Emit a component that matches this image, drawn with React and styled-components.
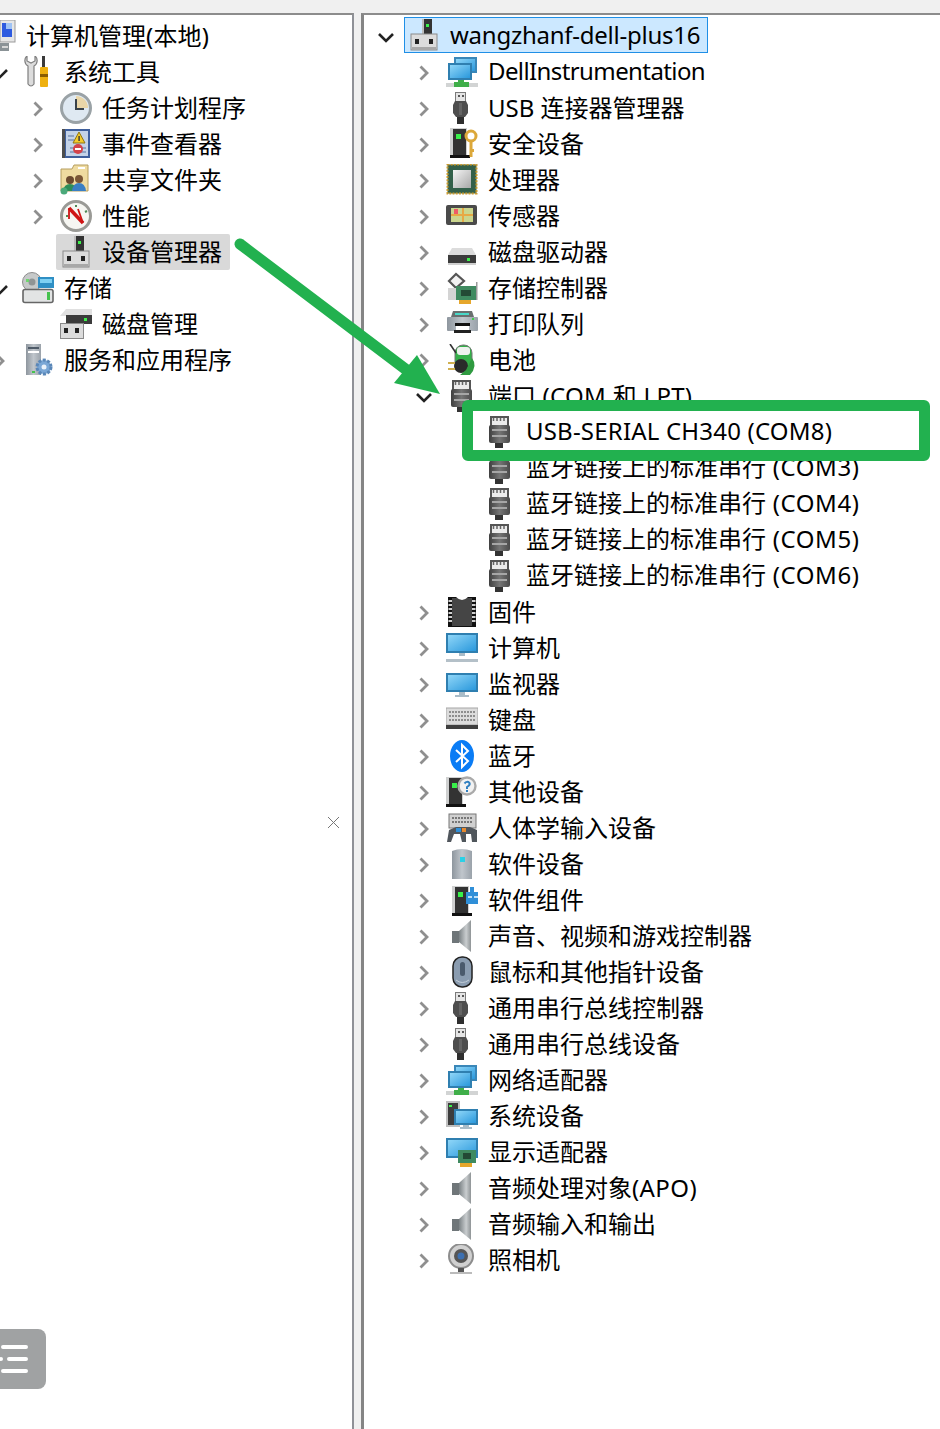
import React from 'react';
import styled, {createGlobalStyle} from 'styled-components';

const GlobalStyle = createGlobalStyle`
  html, body {
    margin: 0;
    padding: 0;
    background: #fff;
  }
  body {
    font-family: "Noto Sans", "Noto Sans CJK SC", sans-serif;
    color: #000;
  }
`;

const Page = styled.div`
  position: relative;
  width: 940px;
  height: 1429px;
  overflow: hidden;
  display: flex;
  flex-direction: column;
  background: #f0f0f0;
`;

const TopStrip = styled.div`
  height: 13px;
  flex: none;
`;

const Panes = styled.div`
  flex: 1;
  display: flex;
  min-height: 0;
  gap: 7px;
`;

const Pane = styled.div`
  background: #fff;
  border-top: 2px solid #8c8c8c;
  overflow: hidden;
  box-sizing: border-box;
  padding-top: 3px;
`;

const LeftPane = styled(Pane)`
  width: 354px;
  flex: none;
  border-right: 2px solid #8f9197;
`;

const RightPane = styled(Pane)`
  flex: 1;
  border-left: 3px solid #858585;
`;

const Tree = styled.div`
  display: flex;
  flex-direction: column;
  margin-left: ${p => p.$offset || 0}px;
`;

const Row = styled.div`
  display: flex;
  align-items: flex-start;
  height: 36px;
  padding-left: ${p => p.$depth * 38}px;
  flex: none;
`;

const ChevronBox = styled.div`
  width: 44px;
  height: 36px;
  flex: none;
  display: flex;
  align-items: center;
  justify-content: center;
  padding-top: 2px;
  box-sizing: border-box;
`;

const Item = styled.div`
  display: flex;
  align-items: center;
  gap: 10px;
  height: 36px;
  padding: 0 8px 0 4px;
  margin-left: -4px;
  margin-top: ${p => p.$sel === 'focus' ? '-1px' : '0'};
  box-sizing: border-box;
  white-space: nowrap;
  background: ${p => p.$sel === 'focus' ? '#cce8ff' : p.$sel === 'idle' ? '#d9d9d9' : 'transparent'};
  border-radius: ${p => p.$sel === 'idle' ? '2px' : '0'};
  box-shadow: ${p => p.$sel === 'focus' ? 'inset 0 0 0 1px #1f8fe6' : 'none'};
`;

const Label = styled.span`
  font-size: 24px;
  line-height: 36px;
  letter-spacing: ${p => p.$ls || 0}px;
  margin-top: ${p => p.$lift ? '-2px' : '0'};
`;

const Tail = styled.span`
  letter-spacing: ${p => p.$ls || 0}px;
`;

const IconBox = styled.svg`
  width: 32px;
  height: 32px;
  flex: none;
  display: block;
`;

const Defs = styled.svg`
  position: absolute;
  width: 0;
  height: 0;
`;

const ArrowMark = styled.svg`
  position: absolute;
  left: 230px;
  top: 234px;
  width: 220px;
  height: 170px;
  pointer-events: none;
`;

const HighlightBox = styled.div`
  position: absolute;
  left: 462px;
  top: 400px;
  width: 468px;
  height: 61px;
  box-sizing: border-box;
  border: 11px solid #22b14f;
  border-radius: 6px;
  pointer-events: none;
`;

const CloseMark = styled.svg`
  position: absolute;
  left: 327px;
  top: 816px;
  width: 13px;
  height: 13px;
`;

const FloatButton = styled.div`
  position: absolute;
  left: 0;
  top: 1329px;
  width: 46px;
  height: 60px;
  background: #a0a2a3;
  border-radius: 0 8px 8px 0;
  display: flex;
  align-items: center;
`;

const Tower = ({x = 0, y = 0}) => (
  <g transform={`translate(${x} ${y})`}>
    <rect x="0" y="0" width="17" height="27" fill="#cfd0d0" />
    <rect x="3" y="1" width="13" height="26" fill="#333" />
    <rect x="6" y="6" width="5" height="5" fill="#38f04a" />
    <rect x="0" y="27" width="20" height="3" fill="#111" />
  </g>
);

const Screen = ({x, y, w, h, frame = '#2f7fb0'}) => (
  <g>
    <rect x={x} y={y} width={w} height={h} fill={frame} />
    <rect x={x + 2} y={y + 2} width={w - 4} height={h - 4} fill="url(#scr)" />
  </g>
);

const BaseBlock = ({x = 0, y = 0}) => (
  <g transform={`translate(${x} ${y})`}>
    <rect x="0" y="0" width="26" height="16" fill="#dcdcdc" stroke="#8a8a8a" />
    <rect x="4" y="5" width="4" height="5" fill="#222" />
    <rect x="18" y="5" width="4" height="5" fill="#222" />
    <rect x="1" y="13" width="24" height="3" fill="#a8a8a8" />
  </g>
);

const Speaker = () => (
  <g>
    <rect x="6" y="11" width="7" height="12" fill="#6f7679" />
    <path d="M13 11 L25 0 V32 L13 22 Z" fill="url(#cone)" />
  </g>
);

const Usb = () => (
  <g>
    <rect x="9.5" y="0.5" width="10" height="9" fill="#e4e4e4" stroke="#7a7a7a" />
    <rect x="12" y="3" width="2" height="2" fill="#555" />
    <rect x="16" y="3" width="2" height="2" fill="#555" />
    <path d="M9 9 H20 L22 13 V21 L19 25 H10 L7 21 V13 Z" fill="#4e4e4e" />
    <rect x="13" y="11" width="3" height="12" fill="#646464" />
    <rect x="11" y="25" width="7" height="7" fill="#2e2e2e" />
  </g>
);

const Port = () => (
  <g>
    <rect x="6" y="0" width="19" height="10" fill="#555" />
    <rect x="8" y="2" width="15" height="7" fill="#ececec" />
    <path d="M9.5 2 v3 M13 2 v3 M16.5 2 v3 M20 2 v3" stroke="#666" strokeWidth="1.5" />
    <rect x="5" y="9" width="21" height="18" rx="2" fill="url(#portBody)" />
    <rect x="8" y="13" width="15" height="2" fill="#a6a6a6" />
    <rect x="8" y="19" width="15" height="2" fill="#a6a6a6" />
    <rect x="11" y="27" width="8" height="5" fill="#333" />
  </g>
);

const Network = () => (
  <g>
    <Screen x={8} y={1} w={23} h={16} frame="#3a87b8" />
    <Screen x={2} y={7} w={24} h={17} />
    <rect x="0" y="27" width="32" height="4" fill="#d2d4d4" />
    <rect x="12" y="24" width="6" height="3" fill="#3fae49" />
    <rect x="8" y="26" width="15" height="5" fill="#3fae49" />
  </g>
);

const icons = {
  computer: (
    <g>
      <rect x="16" y="0" width="15" height="22" fill="#e6e6e6" stroke="#9a9a9a" />
      <rect x="18" y="3" width="10" height="14" fill="#2e5be0" />
      <rect x="22" y="3" width="6" height="6" fill="#9fc3f5" />
      <rect x="16" y="23" width="9" height="8" fill="#8a9296" />
      <rect x="18" y="26" width="6" height="2" fill="#d6d6d6" />
    </g>
  ),
  tools: (
    <g>
      <path d="M5 0 C2 2 2 8 6 10 V28 Q9 32 12 28 V10 C16 8 16 2 13 0 V5 L9 7 L5 5 Z" fill="#dcdcdc" stroke="#7f7f7f" strokeWidth="1.2" />
      <rect x="20" y="0" width="3" height="11" fill="#3a3a3a" />
      <rect x="18" y="11" width="8" height="20" rx="1" fill="#eeb010" />
      <rect x="18" y="18" width="8" height="3" fill="#8a5c00" />
    </g>
  ),
  clock: (
    <g>
      <circle cx="16" cy="16" r="14.5" fill="#dfe9f2" stroke="#9aa2a6" strokeWidth="3" />
      <path d="M16 16 V4 A12 12 0 0 1 28 16 Z" fill="#ead6a8" />
      <path d="M16 7 V17 H24" fill="none" stroke="#39424a" strokeWidth="2" />
    </g>
  ),
  eventlog: (
    <g>
      <rect x="3" y="1" width="27" height="29" fill="#3f5f9c" />
      <rect x="6" y="3" width="22" height="25" fill="#c4d3e8" />
      <path d="M10 20 H26 M10 24 H26 M8 8 H14 M8 12 H14" stroke="#7d94b8" strokeWidth="1.5" />
      <rect x="2" y="1" width="3" height="29" fill="#4d4d4d" />
      <path d="M19 4 L25 15 H13 Z" fill="#f4cb2c" stroke="#8f7412" />
      <rect x="18.4" y="8" width="1.4" height="5" fill="#333" />
      <circle cx="18" cy="21" r="5" fill="#d4434a" />
      <rect x="15" y="20" width="6" height="2" fill="#fff" />
    </g>
  ),
  folder: (
    <g>
      <path d="M1 5 H12 L14 1 H28 V27 H1 Z" fill="#efdba0" stroke="#b69e5e" />
      <rect x="18" y="3" width="7" height="2" fill="#fff" />
      <circle cx="10" cy="16" r="4" fill="#6b4a2f" />
      <path d="M3 27 Q4 20 10 20 Q16 20 17 27 Z" fill="#2e8d58" />
      <circle cx="19" cy="15" r="4" fill="#7a5636" />
      <path d="M12 27 Q13 19 19 19 Q25 19 26 27 Z" fill="#3a7fc4" />
      <circle cx="4" cy="27" r="3.5" fill="#4ba97a" />
    </g>
  ),
  perf: (
    <g>
      <circle cx="16" cy="16" r="14.5" fill="#f6f6f2" stroke="#9a9a96" strokeWidth="3" />
      <path d="M9 8 L23 23" stroke="#cf1515" strokeWidth="3.5" />
      <path d="M9 8 V19 M18 9 L23 23" stroke="#cf1515" strokeWidth="1.8" fill="none" />
      <path d="M6 16 H8 M16 5 V7 M25 12 L27 11" stroke="#4d8a55" strokeWidth="2" />
    </g>
  ),
  devmgr: (
    <g>
      <rect x="14" y="0" width="10" height="15" fill="#333" />
      <rect x="14" y="0" width="2" height="15" fill="#bdbdbd" />
      <rect x="18" y="5" width="3" height="3" fill="#3cf04a" />
      <BaseBlock x={3} y={15} />
    </g>
  ),
  storage: (
    <g>
      <circle cx="10" cy="10" r="9.5" fill="#c6c9c9" stroke="#8d8d8d" />
      <circle cx="10" cy="10" r="3.5" fill="#8f9494" />
      <rect x="4" y="7" width="3" height="3" fill="#6fd66f" />
      <rect x="16" y="5" width="16" height="11" fill="#2f8fc4" />
      <rect x="18" y="7" width="12" height="4" fill="#7fd0f2" />
      <rect x="1" y="17.5" width="30" height="13" rx="2" fill="#e2e4e4" stroke="#666" strokeWidth="1.6" />
      <rect x="25" y="20" width="3" height="8" fill="#45c24e" />
    </g>
  ),
  disk: (
    <g>
      <path d="M6 1 H32 V8 H0 Z" fill="#e0e0e0" />
      <rect x="6" y="7" width="26" height="9" fill="#3b3b3b" />
      <rect x="24" y="10" width="3" height="3" fill="#3cf04a" />
      <rect x="0.5" y="15.5" width="23" height="15" fill="#dcdcdc" stroke="#8a8a8a" />
      <rect x="4" y="20" width="4" height="5" fill="#222" />
      <rect x="15" y="20" width="4" height="5" fill="#222" />
    </g>
  ),
  services: (
    <g>
      <rect x="4" y="0" width="15" height="31" fill="url(#tower)" />
      <rect x="6" y="3" width="11" height="2" fill="#4f5b68" />
      <rect x="6" y="7" width="11" height="2" fill="#fff" />
      <rect x="10" y="27" width="3" height="2" fill="#45c24e" />
      <circle cx="22" cy="23" r="7" fill="#7aa7d6" stroke="#5a87b8" strokeWidth="3" strokeDasharray="3 1.5" />
      <circle cx="22" cy="23" r="2.5" fill="#e9f1fa" />
    </g>
  ),
  network: <Network />,
  usb: <Usb />,
  security: (
    <g>
      <Tower x={4} y={0} />
      <circle cx="25" cy="8" r="5" fill="none" stroke="#dca83a" strokeWidth="3" />
      <rect x="23.5" y="12" width="3" height="17" fill="#dca83a" />
      <rect x="26" y="21" width="2" height="3" fill="#dca83a" />
    </g>
  ),
  cpu: (
    <g>
      <rect x="1.5" y="0.5" width="29" height="29" fill="#33604a" stroke="#c99a2e" strokeWidth="2" strokeDasharray="2 1.2" />
      <rect x="7" y="6" width="18" height="18" fill="url(#chip)" />
    </g>
  ),
  sensor: (
    <g>
      <rect x="0" y="5" width="31" height="20" rx="2" fill="#4a4a4a" />
      <rect x="5" y="8" width="22" height="14" fill="#cbd68e" />
      <path d="M5 15 H27 M17 8 V22" stroke="#e7a945" strokeWidth="2" />
      <rect x="8" y="9" width="4" height="5" fill="#ee5b66" />
    </g>
  ),
  drive: (
    <g>
      <path d="M6 12 H26 L30 19 H2 Z" fill="#dcdcdc" />
      <rect x="2" y="19" width="28" height="8" fill="#3c3c3c" />
      <rect x="21" y="22" width="3" height="3" fill="#3cf04a" />
      <rect x="2" y="27" width="28" height="2" fill="#cfcfcf" />
    </g>
  ),
  storagectl: (
    <g>
      <path d="M3 9 L10 2 L18 9 L10 16 Z" fill="#f2f2f2" stroke="#555" strokeWidth="2.2" />
      <rect x="2" y="16" width="14" height="12" fill="#d4d4d4" />
      <rect x="10" y="14" width="21" height="14" fill="#3f8a60" />
      <rect x="15" y="18" width="10" height="6" fill="#234a35" />
      <rect x="13" y="28" width="12" height="4" fill="#e6a72c" />
      <rect x="30" y="10" width="1.5" height="18" fill="#9a9a9a" />
    </g>
  ),
  printer: (
    <g>
      <path d="M5 9 L7 3 H26 L28 9 Z" fill="#6a6f6f" />
      <rect x="9" y="5" width="14" height="2" fill="#48d8c8" />
      <rect x="1" y="9" width="31" height="14" rx="1" fill="url(#tower)" />
      <rect x="26" y="10" width="2" height="2" fill="#3fd04a" />
      <rect x="9" y="15" width="15" height="3" fill="#111" />
      <rect x="10" y="18" width="13" height="4" fill="#fff" />
      <rect x="8" y="22" width="17" height="3" fill="#222" />
    </g>
  ),
  battery: (
    <g>
      <rect x="9" y="1" width="17" height="27" rx="8" fill="#35b04a" stroke="#777" />
      <rect x="11" y="3" width="13" height="8" rx="3" fill="#eef2ee" />
      <path d="M4 0 L10 9" stroke="#333" strokeWidth="1.6" />
      <circle cx="15" cy="22" r="7" fill="#2a2a2a" />
      <rect x="2" y="18" width="7" height="2" fill="#d0b050" />
      <rect x="2" y="24" width="7" height="2" fill="#d0b050" />
      <path d="M26 14 Q32 22 24 31 L14 31 L20 26 Z" fill="#2f9a40" />
    </g>
  ),
  port: <Port />,
  firmware: (
    <g>
      <rect x="2" y="1" width="28" height="30" fill="#111" />
      <rect x="6" y="2" width="20" height="28" fill="#454545" />
      <path d="M10 1 Q16 7 22 1 Z" fill="#fff" />
      <path d="M2.5 5 H6 M2.5 9 H6 M2.5 13 H6 M2.5 17 H6 M2.5 21 H6 M2.5 25 H6 M26 5 H29.5 M26 9 H29.5 M26 13 H29.5 M26 17 H29.5 M26 21 H29.5 M26 25 H29.5" stroke="#cfcfcf" strokeWidth="2" />
    </g>
  ),
  pc: (
    <g>
      <Screen x={0} y={1} w={32} h={20} />
      <rect x="13" y="21" width="6" height="3" fill="#a9bcc8" />
      <rect x="0" y="27" width="32" height="3" fill="#b4c0c8" />
    </g>
  ),
  monitor: (
    <g>
      <Screen x={0} y={5} w={32} h={19} />
      <rect x="13" y="24" width="6" height="3" fill="#a9bcc8" />
      <rect x="9" y="27" width="14" height="2" fill="#a9bcc8" />
    </g>
  ),
  keyboard: (
    <g>
      <rect x="0" y="4" width="32" height="17" fill="#dcdcdc" stroke="#a5a5a5" />
      <path d="M3 8 H29 M3 12 H29 M3 16 H29" stroke="#8d8d8d" strokeWidth="2" strokeDasharray="2 1" />
      <rect x="0" y="21" width="32" height="4" fill="#3f3f3f" />
    </g>
  ),
  bluetooth: (
    <g>
      <ellipse cx="16" cy="16" rx="12" ry="16" fill="#0a7cf5" />
      <path d="M10 10 L22 21 L16 27 V5 L22 11 L10 22" fill="none" stroke="#fff" strokeWidth="2" />
    </g>
  ),
  other: (
    <g>
      <Tower x={0} y={1} />
      <circle cx="21" cy="10" r="8.5" fill="#f2f2f2" stroke="#aaa" strokeWidth="2.4" />
      <path d="M18.5 7.5 Q21 4.5 23.5 7 Q24.5 9 21 11 V13 M21 14 V16" fill="none" stroke="#2f7fc0" strokeWidth="2" />
    </g>
  ),
  hid: (
    <g>
      <rect x="3" y="2" width="27" height="14" fill="#d0d0d0" stroke="#777" />
      <path d="M6 6 H27 M6 10 H27" stroke="#777" strokeWidth="2" strokeDasharray="2 1" />
      <path d="M1 30 L3 18 L10 15 H24 L31 18 V30 H26 L25 22 H20 V30 H16 L14 22 H8 L5 30 Z" fill="#50565c" />
      <rect x="10" y="16" width="5" height="4" fill="#2f8fd8" />
      <rect x="16" y="16" width="4" height="4" fill="#e88a2e" />
    </g>
  ),
  softdev: (
    <g>
      <path d="M6 3 Q16 -1 26 3 V31 H6 Z" fill="url(#tower)" />
      <rect x="14" y="9" width="5" height="5" fill="#2ad0e6" />
    </g>
  ),
  softcomp: (
    <g>
      <Tower x={6} y={2} />
      <path d="M20 8 H24 V3 H28 V8 H32 V20 H20 Z" fill="#2f8fd8" />
      <path d="M22 13 H26 M28 13 H32" stroke="#bfe0f7" strokeWidth="2" />
    </g>
  ),
  sound: <Speaker />,
  mouse: (
    <g>
      <rect x="7" y="1" width="19" height="30" rx="9" fill="#8a9cb0" stroke="#222" strokeWidth="1.5" />
      <rect x="14" y="6" width="5" height="14" rx="2.5" fill="#4a5a6c" />
      <path d="M10 24 Q16 29 23 24" stroke="#c3ced8" fill="none" />
    </g>
  ),
  sysdev: (
    <g>
      <rect x="0" y="1" width="14" height="26" fill="#bfbfbf" />
      <rect x="2" y="3" width="10" height="22" fill="#3d3d3d" />
      <rect x="3" y="5" width="3" height="2" fill="#3cf04a" />
      <Screen x={8} y={9} w={24} h={16} />
      <rect x="17" y="25" width="6" height="2" fill="#a9bcc8" />
      <rect x="14" y="27" width="12" height="2" fill="#a9bcc8" />
    </g>
  ),
  display: (
    <g>
      <Screen x={0} y={2} w={32} h={20} />
      <rect x="12" y="14" width="18" height="13" fill="#3f8a60" />
      <rect x="17" y="17" width="8" height="6" fill="#234a35" />
      <rect x="14" y="27" width="12" height="4" fill="#e6a72c" />
    </g>
  ),
  camera: (
    <g>
      <circle cx="15" cy="12" r="12" fill="#d0d0d0" stroke="#8d8d8d" strokeWidth="2" />
      <circle cx="15" cy="12" r="7" fill="#555" />
      <circle cx="15" cy="12" r="3.5" fill="#3c6fb0" />
      <rect x="12" y="24" width="6" height="4" fill="#555" />
      <rect x="4" y="28" width="22" height="2" fill="#bbb" />
    </g>
  ),
};

const Icon = ({name}) => <IconBox viewBox="0 0 32 32">{icons[name]}</IconBox>;

const Chevron = ({state}) => {
  if (state === 'open') {
    return (
      <svg width="18" height="11" viewBox="0 0 18 11">
        <path d="M2 2 L9 9 L16 2" fill="none" stroke="#222" strokeWidth="2.6" />
      </svg>
    );
  }
  if (state === 'closed') {
    return (
      <svg width="10" height="16" viewBox="0 0 10 16">
        <path d="M1.5 1.5 L8 8 L1.5 14.5" fill="none" stroke="#8f8f8f" strokeWidth="2.8" />
      </svg>
    );
  }
  return null;
};

const leftRows = [
  {depth: 0, icon: 'computer', text: '计算机管理', tail: '(本地)', tailLs: 0.2},
  {depth: 1, icon: 'tools', text: '系统工具', chev: 'open'},
  {depth: 2, icon: 'clock', text: '任务计划程序', chev: 'closed'},
  {depth: 2, icon: 'eventlog', text: '事件查看器', chev: 'closed'},
  {depth: 2, icon: 'folder', text: '共享文件夹', chev: 'closed'},
  {depth: 2, icon: 'perf', text: '性能', chev: 'closed'},
  {depth: 2, icon: 'devmgr', text: '设备管理器', sel: 'idle'},
  {depth: 1, icon: 'storage', text: '存储', chev: 'open'},
  {depth: 2, icon: 'disk', text: '磁盘管理'},
  {depth: 1, icon: 'services', text: '服务和应用程序', chev: 'closed'},
];

const bluetoothPort = num => ({depth: 2, icon: 'port', text: '蓝牙链接上的标准串行', tail: ` (COM${num})`, tailLs: 0.55, lift: true});

const rightRows = [
  {depth: 0, icon: 'devmgr', text: 'wangzhanf-dell-plus16', chev: 'open', sel: 'focus', ls: -0.25},
  {depth: 1, icon: 'network', text: 'DellInstrumentation', chev: 'closed', ls: -0.6, lift: true},
  {depth: 1, icon: 'usb', text: 'USB 连接器管理器', chev: 'closed'},
  {depth: 1, icon: 'security', text: '安全设备', chev: 'closed'},
  {depth: 1, icon: 'cpu', text: '处理器', chev: 'closed'},
  {depth: 1, icon: 'sensor', text: '传感器', chev: 'closed'},
  {depth: 1, icon: 'drive', text: '磁盘驱动器', chev: 'closed'},
  {depth: 1, icon: 'storagectl', text: '存储控制器', chev: 'closed'},
  {depth: 1, icon: 'printer', text: '打印队列', chev: 'closed'},
  {depth: 1, icon: 'battery', text: '电池', chev: 'closed'},
  {depth: 1, icon: 'port', text: '端口', tail: ' (COM 和 LPT)', tailLs: 0.3, chev: 'open'},
  {depth: 2, icon: 'port', text: 'USB-SERIAL CH340 (COM8)', ls: 0.2, lift: true},
  bluetoothPort(3),
  bluetoothPort(4),
  bluetoothPort(5),
  bluetoothPort(6),
  {depth: 1, icon: 'firmware', text: '固件', chev: 'closed'},
  {depth: 1, icon: 'pc', text: '计算机', chev: 'closed'},
  {depth: 1, icon: 'monitor', text: '监视器', chev: 'closed'},
  {depth: 1, icon: 'keyboard', text: '键盘', chev: 'closed'},
  {depth: 1, icon: 'bluetooth', text: '蓝牙', chev: 'closed'},
  {depth: 1, icon: 'other', text: '其他设备', chev: 'closed'},
  {depth: 1, icon: 'hid', text: '人体学输入设备', chev: 'closed'},
  {depth: 1, icon: 'softdev', text: '软件设备', chev: 'closed'},
  {depth: 1, icon: 'softcomp', text: '软件组件', chev: 'closed'},
  {depth: 1, icon: 'sound', text: '声音、视频和游戏控制器', chev: 'closed'},
  {depth: 1, icon: 'mouse', text: '鼠标和其他指针设备', chev: 'closed'},
  {depth: 1, icon: 'usb', text: '通用串行总线控制器', chev: 'closed'},
  {depth: 1, icon: 'usb', text: '通用串行总线设备', chev: 'closed'},
  {depth: 1, icon: 'network', text: '网络适配器', chev: 'closed'},
  {depth: 1, icon: 'sysdev', text: '系统设备', chev: 'closed'},
  {depth: 1, icon: 'display', text: '显示适配器', chev: 'closed'},
  {depth: 1, icon: 'sound', text: '音频处理对象', tail: '(APO)', tailLs: 0.4, chev: 'closed'},
  {depth: 1, icon: 'sound', text: '音频输入和输出', chev: 'closed'},
  {depth: 1, icon: 'camera', text: '照相机', chev: 'closed'},
];

const TreeRows = ({rows}) => rows.map((row, i) => (
  <Row $depth={row.depth} key={i}>
    <ChevronBox><Chevron state={row.chev} /></ChevronBox>
    <Item $sel={row.sel}>
      <Icon name={row.icon} />
      <Label $ls={row.ls} $lift={row.lift}>
        {row.text}
        {row.tail && <Tail $ls={row.tailLs}>{row.tail}</Tail>}
      </Label>
    </Item>
  </Row>
));

export default function App() {
  return (
    <Page>
      <GlobalStyle />
      <Defs>
        <defs>
          <linearGradient id="scr" x1="0" y1="0" x2="1" y2="1">
            <stop offset="0" stopColor="#8fd6f8" />
            <stop offset="1" stopColor="#2a98dc" />
          </linearGradient>
          <linearGradient id="cone" x1="0" y1="0" x2="1" y2="0">
            <stop offset="0" stopColor="#7b8285" />
            <stop offset="0.6" stopColor="#c9cdcf" />
            <stop offset="1" stopColor="#8f9496" />
          </linearGradient>
          <linearGradient id="chip" x1="0" y1="0" x2="1" y2="1">
            <stop offset="0" stopColor="#f4f4f4" />
            <stop offset="1" stopColor="#a8a8a8" />
          </linearGradient>
          <linearGradient id="tower" x1="0" y1="0" x2="1" y2="0">
            <stop offset="0" stopColor="#8e969e" />
            <stop offset="0.5" stopColor="#c0c6cc" />
            <stop offset="1" stopColor="#9aa2aa" />
          </linearGradient>
          <linearGradient id="portBody" x1="0" y1="0" x2="1" y2="0">
            <stop offset="0" stopColor="#3f3f3f" />
            <stop offset="0.5" stopColor="#757575" />
            <stop offset="1" stopColor="#4a4a4a" />
          </linearGradient>
        </defs>
      </Defs>
      <TopStrip />
      <Panes>
        <LeftPane>
          <Tree $offset={-60}><TreeRows rows={leftRows} /></Tree>
        </LeftPane>
        <RightPane>
          <Tree><TreeRows rows={rightRows} /></Tree>
        </RightPane>
      </Panes>

      <CloseMark viewBox="0 0 13 13">
        <path d="M1 1 L12 12 M12 1 L1 12" stroke="#777" strokeWidth="1" />
      </CloseMark>

      <FloatButton>
        <svg width="30" height="36" viewBox="0 0 30 36">
          <path d="M3 6 H26 M9 18 H26 M3 30 H26" stroke="#fff" strokeWidth="4" strokeLinecap="round" />
          <circle cx="1" cy="18" r="2" fill="#fff" />
        </svg>
      </FloatButton>

      <ArrowMark viewBox="0 0 220 170">
        <path d="M10 10 L178 137" stroke="#22b14f" strokeWidth="11" strokeLinecap="round" />
        <path d="M210 160 L164 149 L187 121 Z" fill="#22b14f" />
      </ArrowMark>
      <HighlightBox />
    </Page>
  );
}
